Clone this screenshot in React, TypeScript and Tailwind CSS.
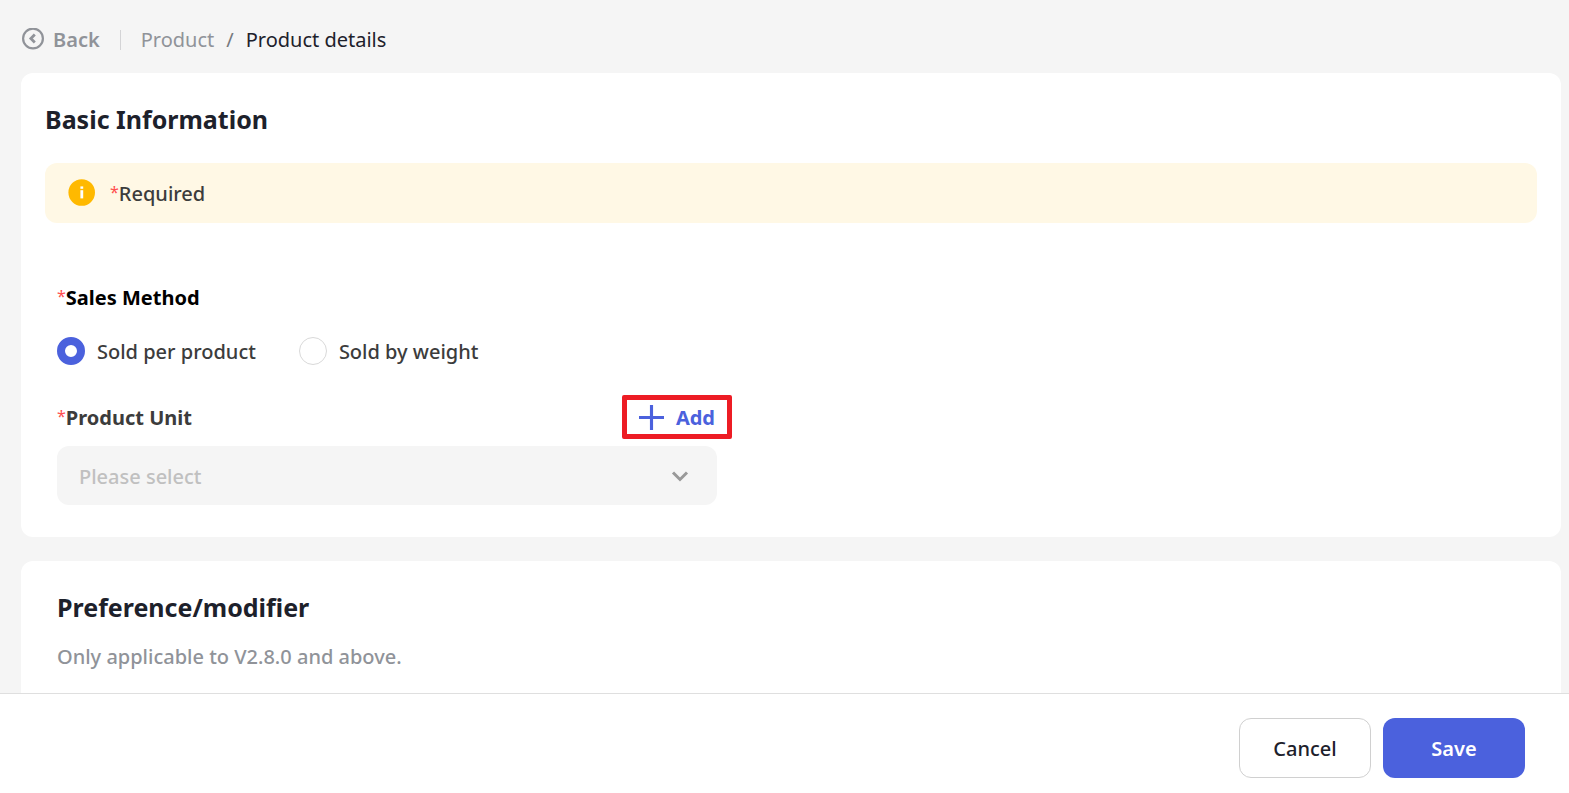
import React, { useState } from 'react';

interface SectionCardProps {
  children: React.ReactNode;
}

const SectionCard: React.FC<SectionCardProps> = ({ children }) => (
  <section className="rounded-xl bg-white p-6">{children}</section>
);

const RequiredMark: React.FC = () => (
  <span className="align-[3px] text-[16px] font-normal leading-none text-[#ff4d4f]">*</span>
);

const Breadcrumb: React.FC = () => (
  <header className="flex h-[73px] shrink-0 items-center pt-[6px]">
    <button type="button" className="flex items-center gap-2 font-semibold text-[#909399]">
      <svg className="size-6" viewBox="0 0 24 24" fill="none" stroke="currentColor" strokeWidth="2.2" aria-hidden="true">
        <circle cx="12" cy="10.5" r="9.9" />
        <path d="M13.8 6.6 9.9 10.5l3.9 3.9" strokeWidth="2.8" />
      </svg>
      Back
    </button>
    <span className="mx-5 h-5 w-px bg-[#d4d4d6]" />
    <nav aria-label="Breadcrumb" className="flex items-center gap-3">
      <a href="#product" className="text-[#909399]">Product</a>
      <span className="text-[#77797e]">/</span>
      <span className="text-[#1d212b]">Product details</span>
    </nav>
  </header>
);

const salesMethods = [
  { value: 'product', label: 'Sold per product' },
  { value: 'weight', label: 'Sold by weight' },
];

const BasicInformation: React.FC = () => {
  const [method, setMethod] = useState('product');

  return (
    <SectionCard>
      <h2 className="text-[25px] font-bold leading-[44px] text-[#1d212b]">Basic Information</h2>

      <div className="mt-[22px] flex h-[60px] items-center gap-[14px] rounded-xl bg-[#fff8e5] px-[23px] font-medium text-[#3c3c3c]">
        <svg className="size-7" viewBox="0 0 28 28" aria-hidden="true">
          <circle cx="13.7" cy="13.5" r="13.3" fill="#ffb900" />
          <rect x="12.4" y="7.4" width="2.8" height="2.4" fill="#fff" />
          <rect x="12.4" y="11.2" width="2.8" height="8.2" fill="#fff" />
        </svg>
        <span className="pt-[2px]"><RequiredMark />Required</span>
      </div>

      <div className="px-3 pb-2 pt-[60px]">
        <fieldset>
          <legend className="pt-px font-bold leading-7 text-black"><RequiredMark />Sales Method</legend>
          <div className="flex gap-[43px] pt-[23px]">
            {salesMethods.map((item) => (
              <label key={item.value} className="flex h-8 items-center gap-3 font-medium text-[#3c3c3c]">
                <input
                  type="radio"
                  name="sales-method"
                  value={item.value}
                  checked={method === item.value}
                  onChange={() => setMethod(item.value)}
                  className="size-7 appearance-none rounded-full border border-[#d9d9d9] bg-white checked:border-8 checked:border-[#4b61dd]"
                />
                <span className="pt-[2px]">{item.label}</span>
              </label>
            ))}
          </div>
        </fieldset>

        <div className="w-full max-w-[660px] pt-7">
          <div className="flex h-11 items-center justify-between">
            <label htmlFor="product-unit" className="pt-[2px] font-bold text-[#3c3c3c]"><RequiredMark />Product Unit</label>
            <button
              type="button"
              className="-mr-[15px] flex h-11 items-center gap-3 rounded-xs border-5 border-[#ed1c24] px-3 font-bold text-[#4b61dd]"
            >
              <svg className="size-[25px]" viewBox="0 0 24 24" fill="none" stroke="currentColor" strokeWidth="3" aria-hidden="true">
                <path d="M12 0v24M0 12h24" />
              </svg>
              <span className="pt-[2px]">Add</span>
            </button>
          </div>
          <div className="relative mt-[7px]">
            <select
              id="product-unit"
              defaultValue=""
              className="h-[59px] w-full appearance-none rounded-xl bg-[#f5f5f5] px-[22px] pt-[2px] font-medium text-[#c0c0c0]"
            >
              <option value="">Please select</option>
            </select>
            <svg
              className="pointer-events-none absolute right-7 top-[22px] h-4 w-[18px]"
              viewBox="0 0 18 16"
              fill="none"
              stroke="#999"
              strokeWidth="3"
              aria-hidden="true"
            >
              <path d="M2 4.5l7 7 7-7" />
            </svg>
          </div>
        </div>
      </div>
    </SectionCard>
  );
};

const PreferenceModifier: React.FC = () => (
  <SectionCard>
    <div className="px-3 pb-6">
      <h2 className="text-[25px] font-bold leading-[44px] text-[#1d212b]">Preference/modifier</h2>
      <p className="mt-3 font-medium leading-8 text-[#909399]">Only applicable to V2.8.0 and above.</p>
    </div>
  </SectionCard>
);

const App: React.FC = () => (
  <div className="flex h-screen flex-col bg-[#f5f5f5] font-['Noto_Sans',sans-serif] text-[20px] leading-7">
    <main className="flex min-h-0 flex-1 flex-col overflow-hidden pl-[21px] pr-2">
      <Breadcrumb />
      <div className="flex flex-col gap-6">
        <BasicInformation />
        <PreferenceModifier />
      </div>
    </main>

    <footer className="flex shrink-0 justify-end gap-3 border-t border-[#dfdfdf] bg-white pb-[15px] pr-11 pt-6">
      <button type="button" className="h-[60px] w-[132px] rounded-xl border border-[#d0d0d0] bg-white pt-[2px] font-medium text-[#1d212b]">
        Cancel
      </button>
      <button type="button" className="h-[60px] w-[142px] rounded-xl bg-[#4b61dd] pt-[2px] font-semibold text-white">
        Save
      </button>
    </footer>
  </div>
);

export default App;
